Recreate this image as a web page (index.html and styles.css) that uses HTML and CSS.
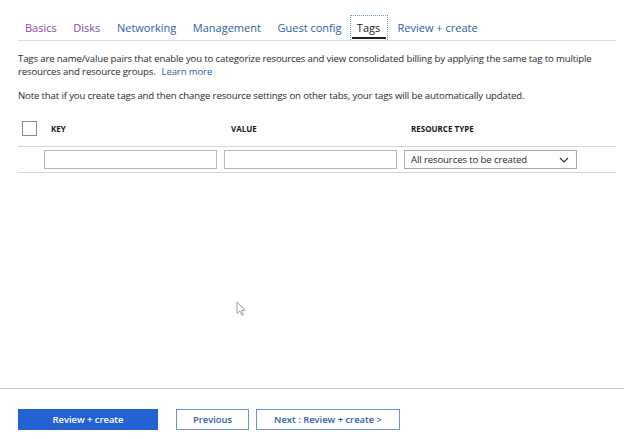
FILE: index.html
```html
<!DOCTYPE html>
<html>
<head>
<meta charset="utf-8">
<link rel="stylesheet" href="styles.css">
</head>
<body>
<div class="page">
  <main class="main">
    <nav class="tabs">
      <span class="tab visited">Basics</span>
      <span class="tab visited">Disks</span>
      <span class="tab">Networking</span>
      <span class="tab">Management</span>
      <span class="tab">Guest config</span>
      <span class="tab active">Tags</span>
      <span class="tab">Review + create</span>
    </nav>
    <div class="desc">
      <div class="desc-line">Tags are name/value pairs that enable you to categorize resources and view consolidated billing by applying the same tag to multiple</div>
      <div class="desc-line split"><span>resources and resource groups.</span><a class="link">Learn more</a></div>
    </div>
    <p class="desc note">Note that if you create tags and then change resource settings on other tabs, your tags will be automatically updated.</p>
    <div class="table">
      <div class="row head">
        <div class="cell-check"><span class="checkbox"></span></div>
        <div class="col">KEY</div>
        <div class="col">VALUE</div>
        <div class="col">RESOURCE TYPE</div>
      </div>
      <div class="row body">
        <div class="cell-check"></div>
        <div class="col"><span class="input"></span></div>
        <div class="col"><span class="input"></span></div>
        <div class="col"><span class="input select"><span>All resources to be created</span>
          <svg class="chev" width="10" height="6" viewBox="0 0 10 6"><path d="M1 1l4 4 4-4" fill="none" stroke="#333" stroke-width="1.2"/></svg></span></div>
      </div>
    </div>
  </main>
  <footer class="footer">
    <button class="btn primary">Review + create</button>
    <button class="btn secondary prev">Previous</button>
    <button class="btn secondary next">Next : Review + create &gt;</button>
  </footer>
  <svg class="cursor" width="10" height="16" viewBox="0 0 10 16"><path d="M1 1v11.5l2.8-2.6 2 4.3 1.6-.7-2-4.2H9z" fill="#fff" stroke="#888" stroke-width="0.8"/></svg>
</div>
</body>
</html>
```
FILE: styles.css
```css
* { box-sizing: border-box; }
html, body { margin: 0; padding: 0; }
body {
  font-family: "Open Sans", "Noto Sans", sans-serif;
  color: #2b2b2b;
  background: #fff;
}
.page {
  position: relative;
  height: 439px;
  display: flex;
  flex-direction: column;
}
.main {
  flex: 1;
  padding: 15px 8px 0 18px;
}
.tabs {
  display: flex;
  border-bottom: 1px solid #dcdcdc;
  height: 26px;
}
.tab {
  font-size: 11px;
  color: #2e62a8;
  padding: 2px 8.3px 0;
  height: 25px;
  line-height: 22px;
  white-space: nowrap;
}
.tab:first-child { padding-left: 7px; }
.tab.visited { color: #8a4c9c; }
.tab.active {
  color: #1a1a1a;
  border: 1px dotted #6b9bd2;
  border-bottom: none;
  margin-right: 1px;
  padding: 1px 7px 0 6px;
  position: relative;
}
.tab.active::after {
  content: "";
  position: absolute;
  left: 1px; right: 1px; bottom: 1px;
  height: 2px;
  background: #222;
}
.desc {
  margin: 11px 0 0 0;
  font-size: 9.6px;
  letter-spacing: -0.14px;
  line-height: 13px;
  color: #2b2b2b;
}
.desc-line { white-space: nowrap; }
.desc-line.split {
  display: flex;
  gap: 6px;
}
.desc.note { margin-top: 11px; }
.link { color: #2e62a8; }
.table { margin-top: 8px; }
.row {
  display: flex;
  align-items: center;
}
.row.head {
  height: 37px;
  border-bottom: 1px solid #d6d6d6;
}
.row.body {
  height: 26px;
  border-bottom: 1px solid #d6d6d6;
}
.cell-check {
  width: 26px;
  display: flex;
  align-items: center;
  padding-left: 4px;
}
.checkbox {
  width: 15px; height: 15px;
  border: 1px solid #8a8a8a;
  display: block;
}
.head .col {
  font-size: 8px;
  font-weight: 700;
  color: #1a1a1a;
  width: 180px;
  padding-left: 7px;
}
.body .col { width: 180px; }
.input {
  display: block;
  width: 173px;
  height: 19px;
  border: 1px solid #b8b8b8;
}
.select {
  display: flex;
  align-items: center;
  justify-content: space-between;
  font-size: 9.6px;
  letter-spacing: -0.12px;
  color: #2b2b2b;
  padding: 0 7px 0 6px;
  border-color: #a8a8a8;
}
.footer {
  height: 51px;
  border-top: 1px solid #c8c8c8;
  display: flex;
  align-items: flex-start;
  padding: 20px 0 0 18px;
}
.btn {
  font-family: inherit;
  height: 21px;
  font-size: 9.4px;
  padding: 0;
  cursor: default;
}
.primary {
  width: 140px;
  background: #2462d4;
  border: 1px solid #2462d4;
  color: #fff;
  font-weight: 600;
}
.secondary {
  background: #fff;
  border: 1px solid #6f93d4;
  color: #2e62a8;
  font-weight: 600;
}
.prev { width: 73px; margin-left: 18px; }
.next { width: 144px; margin-left: 7px; }
.cursor {
  position: absolute;
  left: 236px;
  top: 301px;
}
```
